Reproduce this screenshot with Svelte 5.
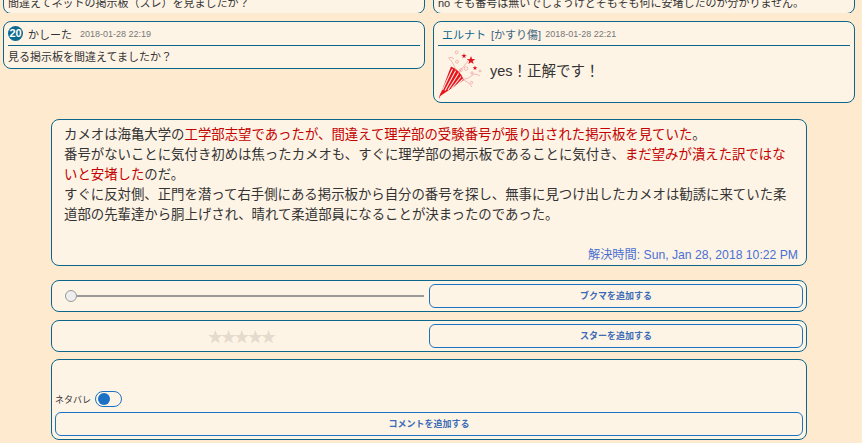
<script>
    const stars = [1, 2, 3, 4, 5];
    const starShape = "0,-5 1.200,-1.600 4.800,-1.500 1.900,0.600 2.900,4 0,2 -2.900,4 -1.900,0.600 -4.800,-1.500 -1.200,-1.600";
</script>

<div class="page">
    <div class="thread clipped">
        <div class="card"><p class="body">間違えてネットの掲示板（スレ）を見ましたか？</p></div>
        <div class="card"><p class="body">no そも番号は無いでしょうけどそもそも何に安堵したのか分かりません。</p></div>
    </div>

    <div class="thread">
        <div class="card comment">
            <div class="head">
                <span class="num">20</span>
                <span class="name">かしーた</span>
                <span class="date">2018-01-28 22:19</span>
            </div>
            <p class="body">見る掲示板を間違えてましたか？</p>
        </div>
        <div class="card answer">
            <div class="head host">
                <span class="host-name">エルナト</span>
                <span class="name">[かすり傷]</span>
                <span class="date">2018-01-28 22:21</span>
            </div>
            <div class="result">
                <svg width="48" height="50" viewBox="0 0 48 50" aria-hidden="true">
                    <path d="M0.500 47.500 L12 17.500 Q21 21 25 31 Z" fill="#e8141c" />
                    <path d="M3.500 41 L13.500 20 M6 41.500 L16.500 22 M9 41 L19.500 24.500 M12.500 39.500 L22 27.500 M16 38 L24 30" stroke="#fdeee4" stroke-width="1.100" />
                    <path d="M0 49.500 L2 44" stroke="#e8141c" stroke-width="0.700" />
                    <g fill="none" stroke="#eb8f8f" stroke-width="0.600">
                        <path d="M17 22 Q14 12 9.500 9 Q12 7 15 10" />
                        <path d="M18 25 Q24 19 29 12" />
                        <path d="M23 31 Q30 30 35 25 Q39 25 41 27" />
                        <path d="M25 31 Q31 34 33 38" />
                        <circle cx="17.700" cy="3.300" r="1.500" />
                        <circle cx="18" cy="12.700" r="1.500" />
                        <circle cx="27" cy="19.500" r="1.800" />
                        <circle cx="33" cy="24" r="1.200" />
                        <circle cx="41" cy="22" r="1" />
                        <circle cx="32.500" cy="33.500" r="1.200" />
                        <circle cx="22" cy="21" r="1.400" />
                    </g>
                    <g fill="#e0101a">
                        <polygon points={starShape} transform="translate(32 11.500) scale(0.900)" />
                        <polygon points={starShape} transform="translate(25 7) scale(0.550)" />
                        <polygon points={starShape} transform="translate(36 19) scale(0.500)" />
                    </g>
                </svg>
                <span class="yes">yes！正解です！</span>
            </div>
        </div>
    </div>

    <div class="column">
        <div class="panel explain">
            <p>カメオは海亀大学の<span class="red">工学部志望であったが、間違えて理学部の受験番号が張り出された掲示板を見ていた</span>。</p>
            <p>番号がないことに気付き初めは焦ったカメオも、すぐに理学部の掲示板であることに気付き、<span class="red">まだ望みが潰えた訳ではないと安堵した</span>のだ。</p>
            <p>すぐに反対側、正門を潜って右手側にある掲示板から自分の番号を探し、無事に見つけ出したカメオは勧誘に来ていた柔道部の先輩達から胴上げされ、晴れて柔道部員になることが決まったのであった。</p>
            <div class="solved">解決時間: Sun, Jan 28, 2018 10:22 PM</div>
        </div>

        <div class="panel split">
            <div class="slider">
                <span class="thumb"></span>
                <span class="track"></span>
            </div>
            <button>ブクマを追加する</button>
        </div>

        <div class="panel split">
            <div class="stars">
                {#each stars as s (s)}<span>★</span>{/each}
            </div>
            <button>スターを追加する</button>
        </div>

        <div class="panel form">
            <div class="textarea"></div>
            <div class="spoiler">
                <span>ネタバレ</span>
                <span class="toggle"><span class="knob"></span></span>
            </div>
            <button class="wide">コメントを追加する</button>
        </div>
    </div>
</div>

<style>
    :global(body) {
        background-color: #fdeacf;
        overflow: hidden;
    }

    .page {
        height: 443px;
        overflow: hidden;
        font-family: "Liberation Sans", "Noto Sans CJK JP", sans-serif;
        color: #333;
    }

    .thread {
        display: grid;
        grid-template-columns: 422px 422px;
        gap: 8px;
        padding-left: 3px;
        margin-bottom: 8px;
        align-items: start;
    }

    .clipped {
        height: 13px;
        overflow: hidden;
    }

    .clipped .card {
        margin-top: -12px;
        padding-top: 6px;
        height: 18px;
    }

    .card {
        background-color: #fef4e6;
        border: 1px solid #0b668c;
        border-radius: 8px;
        padding: 0 4px;
        box-sizing: content-box;
    }

    .body {
        margin: 0;
        font-size: 11px;
        line-height: 16px;
    }

    .comment {
        height: 46px;
    }

    .comment .body {
        margin-top: 3px;
    }

    .answer {
        height: 80px;
    }

    .head {
        display: flex;
        align-items: center;
        height: 23px;
        border-bottom: 1px solid #0b668c;
        margin-bottom: 1px;
        font-size: 11px;
    }

    .host {
        padding-left: 4px;
    }

    .num {
        width: 15px;
        height: 15px;
        border-radius: 50%;
        background-color: #0b6a90;
        color: #fff;
        font-size: 11px;
        font-weight: bold;
        line-height: 15px;
        text-align: center;
        margin-right: 5px;
    }

    .name {
        margin-right: 8px;
    }

    .host-name {
        color: #0b668c;
        margin-right: 5px;
    }

    .host .name {
        margin-right: 4px;
        color: #3d6480;
    }

    .date {
        font-size: 9px;
        color: #777;
    }

    .result {
        display: flex;
        align-items: center;
        height: 54px;
        padding-left: 1px;
    }

    .yes {
        font-size: 14.500px;
        margin: 0 0 9px 3px;
    }

    .column {
        width: 756px;
        margin: 16px 0 0 51px;
        display: flex;
        flex-direction: column;
        gap: 8px;
    }

    .panel {
        background-color: #fef4e6;
        border: 1px solid #0b668c;
        border-radius: 8px;
    }

    .explain {
        height: 147px;
        box-sizing: border-box;
        padding: 5px 12px 0;
        font-size: 13.400px;
        line-height: 20px;
        margin-bottom: 6px;
    }

    .explain p {
        margin: 0;
    }

    .red {
        color: #c40000;
    }

    .solved {
        margin: 20px -4px 0 0;
        text-align: right;
        font-size: 12.200px;
        color: #4a70d4;
    }

    .split {
        display: grid;
        grid-template-columns: 1fr 374px;
        align-items: center;
        height: 32px;
        box-sizing: border-box;
        padding: 0 3px 0 0;
        gap: 4px;
    }

    button {
        height: 24px;
        background-color: #fef4e6;
        border: 1px solid #1b72c4;
        border-radius: 6px;
        color: #3c6cb8;
        font-family: inherit;
        font-size: 9px;
        font-weight: bold;
        padding: 0 0 2px;
    }

    .slider {
        display: flex;
        align-items: center;
        padding: 0 1px 0 13px;
    }

    .thumb {
        width: 10px;
        height: 10px;
        border: 1px solid #999;
        border-radius: 50%;
        background-color: #eee;
        flex: none;
    }

    .track {
        flex: 1;
        height: 2px;
        background-color: #999;
    }

    .stars {
        display: flex;
        justify-content: center;
        padding-left: 5px;
        font-size: 15px;
        line-height: 1;
        color: #e4dacd;
    }

    .stars span {
        width: 13.300px;
        text-align: center;
    }

    .form {
        height: 81px;
        box-sizing: border-box;
        padding: 9px 3px 0;
        margin-top: -1px;
    }

    .textarea {
        height: 20px;
        border: 1px solid #fdf2e3;
        border-radius: 10px;
        box-sizing: border-box;
        margin-bottom: 2px;
    }

    .spoiler {
        display: flex;
        align-items: center;
        gap: 4px;
        height: 16px;
        font-size: 9px;
        margin-bottom: 5px;
    }

    .toggle {
        width: 23px;
        height: 14px;
        border: 1px solid #1b72c4;
        border-radius: 8px;
        display: flex;
        align-items: center;
        padding-left: 2px;
    }

    .knob {
        width: 12px;
        height: 12px;
        background-color: #1b72c4;
        border-radius: 50%;
    }

    .wide {
        width: 100%;
    }
</style>
